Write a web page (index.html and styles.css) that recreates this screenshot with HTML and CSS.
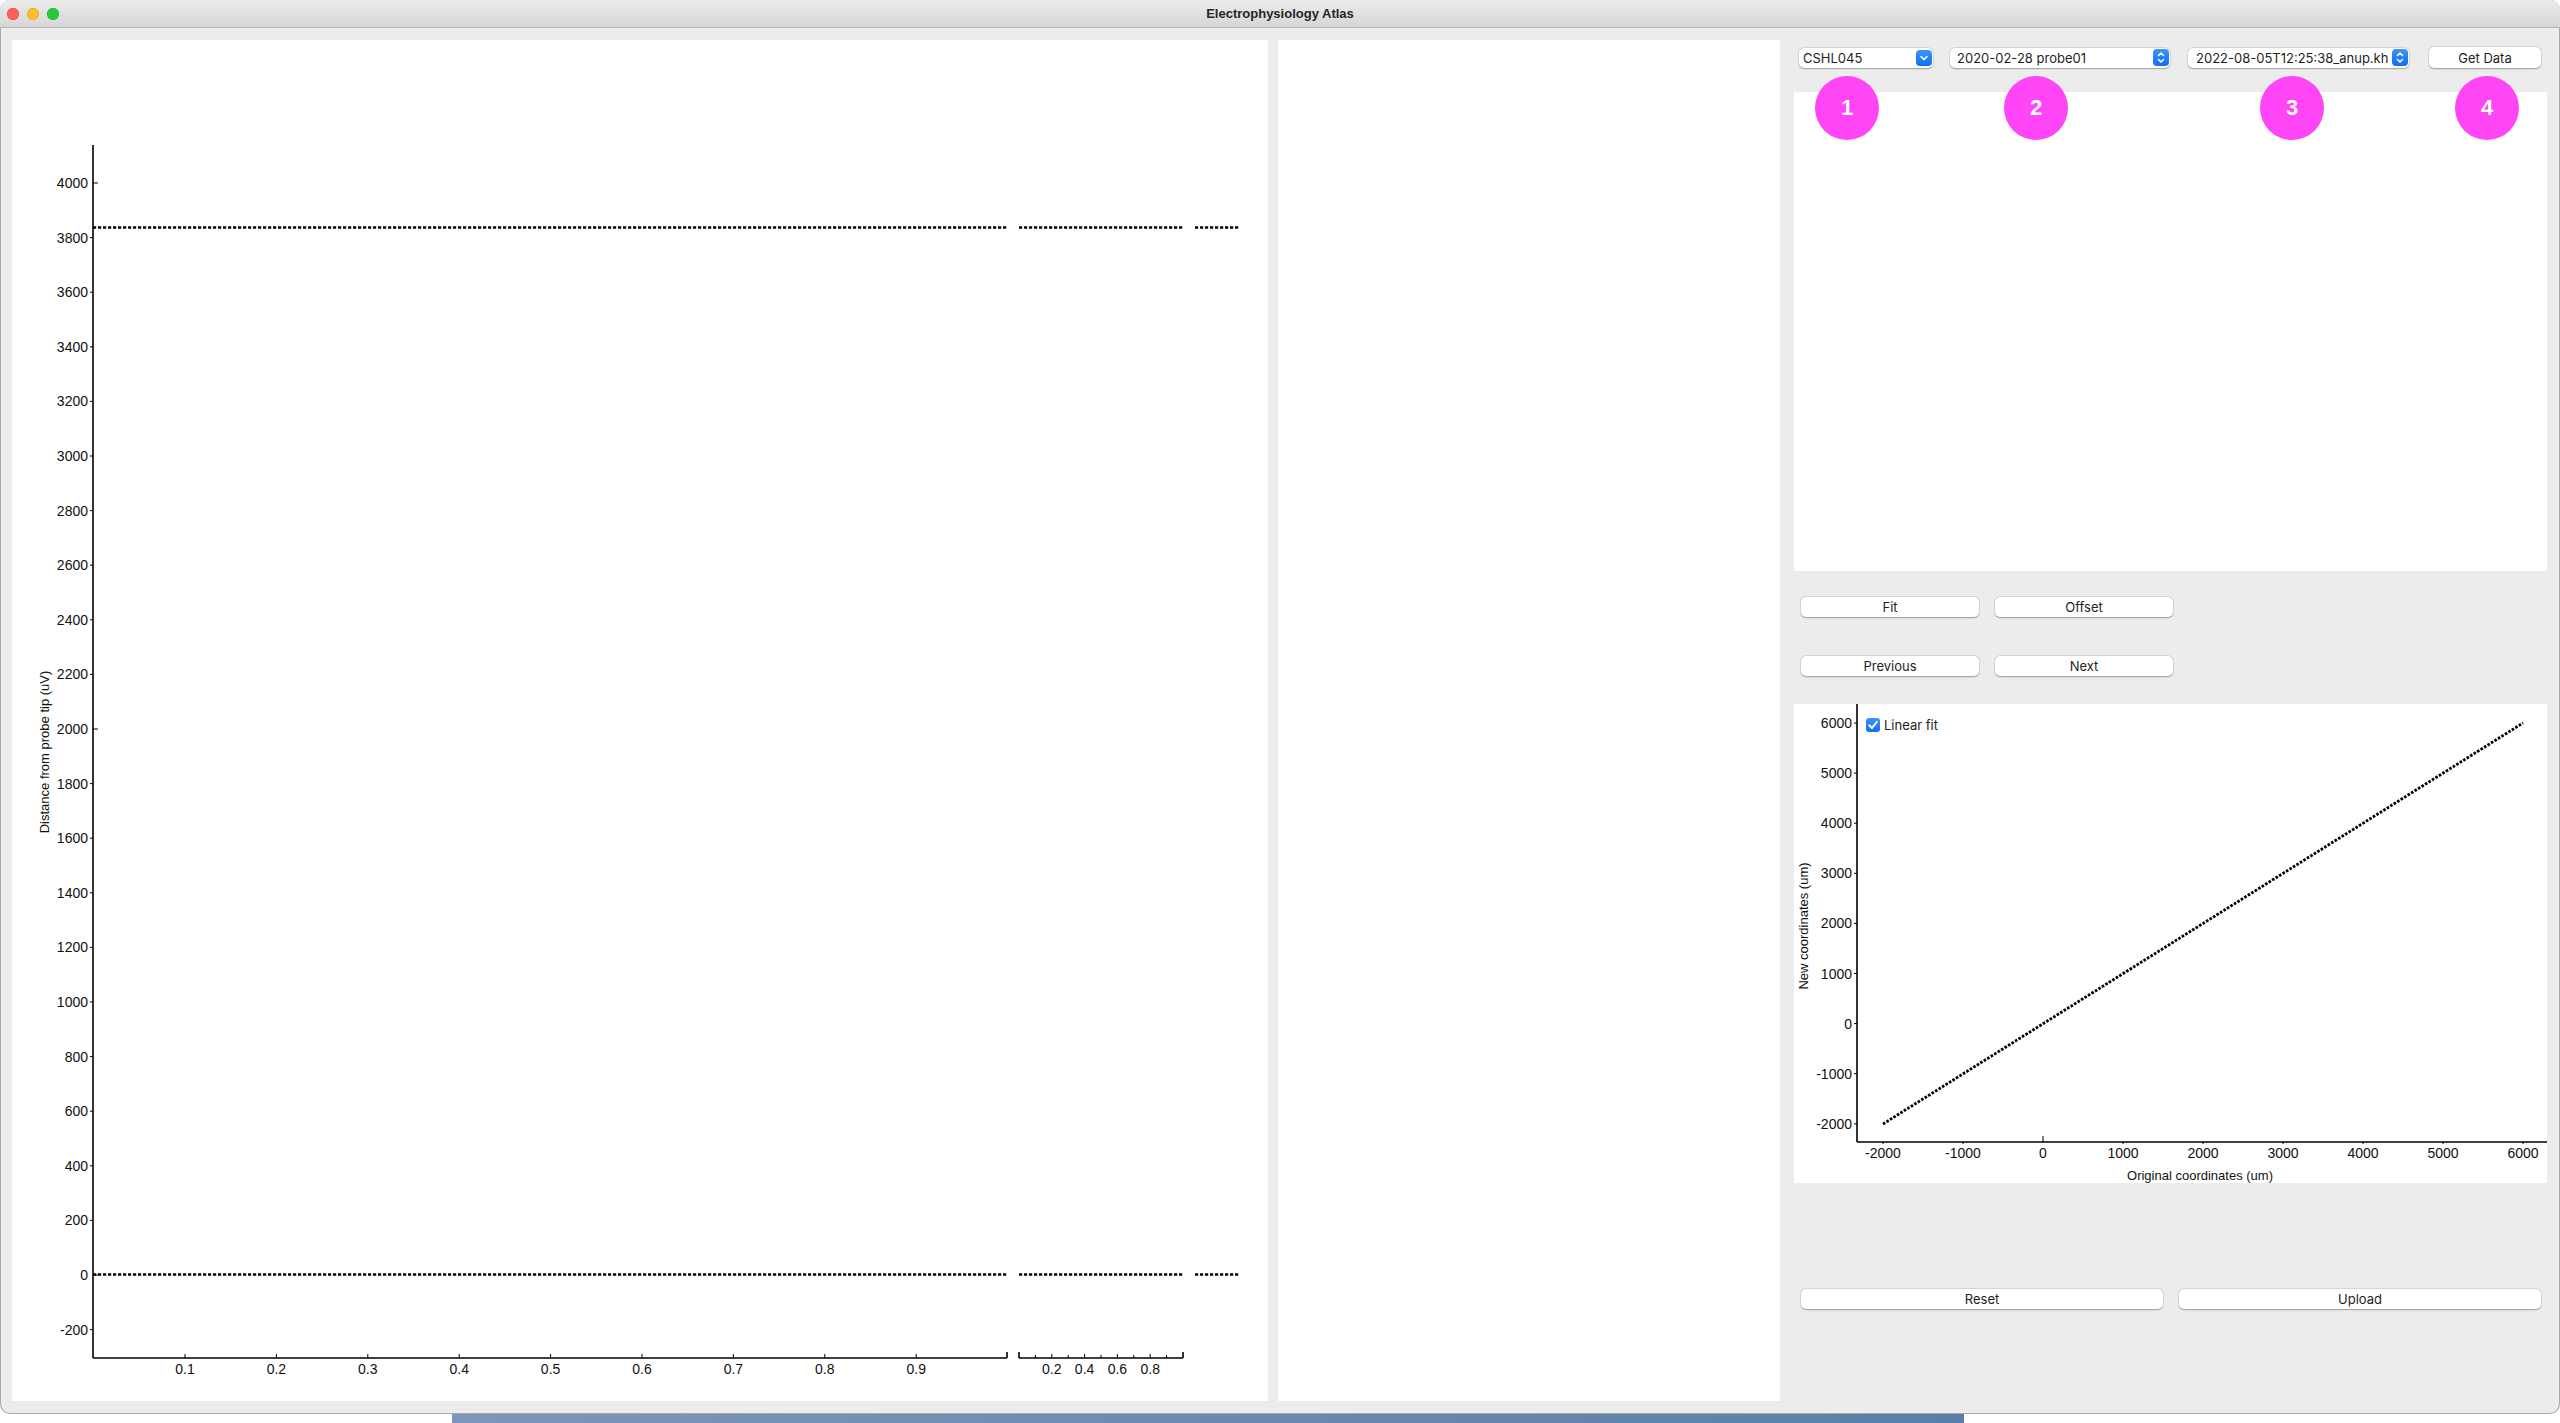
FILE: index.html
```html
<!DOCTYPE html>
<html>
<head>
<meta charset="utf-8">
<title>Electrophysiology Atlas</title>
<link rel="stylesheet" href="styles.css">
</head>
<body>
<div class="window">
  <div class="titlebar">
    <div class="lights">
      <span class="light red"></span>
      <span class="light yellow"></span>
      <span class="light green"></span>
    </div>
    <div class="title">Electrophysiology Atlas</div>
    <div class="lights-spacer"></div>
  </div>
  <div class="content">
    <div class="panel left-panel">
      <svg class="plot-svg" width="1256" height="1361" viewBox="0 0 1256 1361">
        <g class="axis" stroke="#000" stroke-width="1.6" fill="none">
          <line x1="81" y1="105" x2="81" y2="1318"/>
          <line x1="81" y1="1318" x2="995" y2="1318"/>
          <line x1="995" y1="1318" x2="995" y2="1312"/>
          <line x1="1007" y1="1318" x2="1171" y2="1318"/>
          <line x1="1007" y1="1318" x2="1007" y2="1312"/>
          <line x1="1171" y1="1318" x2="1171" y2="1312"/>
        </g>
        <g stroke="#000" stroke-width="1">
          <line x1="81" y1="143" x2="86" y2="143"/>
          <line x1="81" y1="689" x2="86" y2="689"/>
          <line x1="81" y1="1235" x2="86" y2="1235"/>
          <line x1="78" y1="197.6" x2="81" y2="197.6"/>
          <line x1="78" y1="252.2" x2="81" y2="252.2"/>
          <line x1="78" y1="306.8" x2="81" y2="306.8"/>
          <line x1="78" y1="361.4" x2="81" y2="361.4"/>
          <line x1="78" y1="416" x2="81" y2="416"/>
          <line x1="78" y1="470.6" x2="81" y2="470.6"/>
          <line x1="78" y1="525.2" x2="81" y2="525.2"/>
          <line x1="78" y1="579.8" x2="81" y2="579.8"/>
          <line x1="78" y1="634.4" x2="81" y2="634.4"/>
          <line x1="78" y1="743.6" x2="81" y2="743.6"/>
          <line x1="78" y1="798.2" x2="81" y2="798.2"/>
          <line x1="78" y1="852.8" x2="81" y2="852.8"/>
          <line x1="78" y1="907.4" x2="81" y2="907.4"/>
          <line x1="78" y1="962" x2="81" y2="962"/>
          <line x1="78" y1="1016.6" x2="81" y2="1016.6"/>
          <line x1="78" y1="1071.2" x2="81" y2="1071.2"/>
          <line x1="78" y1="1125.8" x2="81" y2="1125.8"/>
          <line x1="78" y1="1180.4" x2="81" y2="1180.4"/>
          <line x1="78" y1="1289.6" x2="81" y2="1289.6"/>
          <line x1="173" y1="1318" x2="173" y2="1314"/>
          <line x1="264.4" y1="1318" x2="264.4" y2="1314"/>
          <line x1="355.8" y1="1318" x2="355.8" y2="1314"/>
          <line x1="447.2" y1="1318" x2="447.2" y2="1314"/>
          <line x1="538.6" y1="1318" x2="538.6" y2="1314"/>
          <line x1="630" y1="1318" x2="630" y2="1314"/>
          <line x1="721.4" y1="1318" x2="721.4" y2="1314"/>
          <line x1="812.8" y1="1318" x2="812.8" y2="1314"/>
          <line x1="904.2" y1="1318" x2="904.2" y2="1314"/>
          <line x1="1023.4" y1="1318" x2="1023.4" y2="1315"/>
          <line x1="1039.8" y1="1318" x2="1039.8" y2="1314"/>
          <line x1="1056.2" y1="1318" x2="1056.2" y2="1315"/>
          <line x1="1072.6" y1="1318" x2="1072.6" y2="1314"/>
          <line x1="1089" y1="1318" x2="1089" y2="1315"/>
          <line x1="1105.4" y1="1318" x2="1105.4" y2="1314"/>
          <line x1="1121.8" y1="1318" x2="1121.8" y2="1315"/>
          <line x1="1138.2" y1="1318" x2="1138.2" y2="1314"/>
          <line x1="1154.6" y1="1318" x2="1154.6" y2="1315"/>
        </g>
        <g class="dash" stroke="#000" stroke-width="2.6" stroke-dasharray="3.2 1.8">
          <line x1="81" y1="187.5" x2="995" y2="187.5"/>
          <line x1="1007" y1="187.5" x2="1171" y2="187.5"/>
          <line x1="1183" y1="187.5" x2="1228" y2="187.5"/>
          <line x1="81" y1="1234.5" x2="995" y2="1234.5"/>
          <line x1="1007" y1="1234.5" x2="1171" y2="1234.5"/>
          <line x1="1183" y1="1234.5" x2="1228" y2="1234.5"/>
        </g>
        <g class="ticklabels" text-anchor="end">
          <text x="76" y="148">4000</text>
          <text x="76" y="202.6">3800</text>
          <text x="76" y="257.2">3600</text>
          <text x="76" y="311.8">3400</text>
          <text x="76" y="366.4">3200</text>
          <text x="76" y="421">3000</text>
          <text x="76" y="475.6">2800</text>
          <text x="76" y="530.2">2600</text>
          <text x="76" y="584.8">2400</text>
          <text x="76" y="639.4">2200</text>
          <text x="76" y="694">2000</text>
          <text x="76" y="748.6">1800</text>
          <text x="76" y="803.2">1600</text>
          <text x="76" y="857.8">1400</text>
          <text x="76" y="912.4">1200</text>
          <text x="76" y="967">1000</text>
          <text x="76" y="1021.6">800</text>
          <text x="76" y="1076.2">600</text>
          <text x="76" y="1130.8">400</text>
          <text x="76" y="1185.4">200</text>
          <text x="76" y="1240">0</text>
          <text x="76" y="1294.6">-200</text>
        </g>
        <g class="ticklabels" text-anchor="middle">
          <text x="173" y="1334">0.1</text>
          <text x="264.4" y="1334">0.2</text>
          <text x="355.8" y="1334">0.3</text>
          <text x="447.2" y="1334">0.4</text>
          <text x="538.6" y="1334">0.5</text>
          <text x="630" y="1334">0.6</text>
          <text x="721.4" y="1334">0.7</text>
          <text x="812.8" y="1334">0.8</text>
          <text x="904.2" y="1334">0.9</text>
          <text x="1039.8" y="1334">0.2</text>
          <text x="1072.6" y="1334">0.4</text>
          <text x="1105.4" y="1334">0.6</text>
          <text x="1138.2" y="1334">0.8</text>
        </g>
        <text class="axislabel" text-anchor="middle" transform="translate(37 712) rotate(-90)">Distance from probe tip (uV)</text>
      </svg>
    </div>
    <div class="panel mid-panel"></div>
    <div class="right-col">
      <div class="selectors">
        <div class="combo combo-subject">
          <span class="combo-text">CSHL045</span>
          <span class="combo-btn">
            <svg width="16" height="16" viewBox="0 0 16 16"><path d="M5 6.5 L8 9.5 L11 6.5" fill="none" stroke="#fff" stroke-width="1.6" stroke-linecap="round" stroke-linejoin="round"/></svg>
          </span>
        </div>
        <div class="combo combo-session">
          <span class="combo-text">2020-02-28 probe01</span>
          <span class="combo-btn updown">
            <svg width="16" height="17" viewBox="0 0 16 17"><path d="M5.5 6.5 L8 4 L10.5 6.5 M5.5 10.5 L8 13 L10.5 10.5" fill="none" stroke="#fff" stroke-width="1.5" stroke-linecap="round" stroke-linejoin="round"/></svg>
          </span>
        </div>
        <div class="combo combo-align">
          <span class="combo-text">2022-08-05T12:25:38_anup.kh</span>
          <span class="combo-btn updown">
            <svg width="16" height="17" viewBox="0 0 16 17"><path d="M5.5 6.5 L8 4 L10.5 6.5 M5.5 10.5 L8 13 L10.5 10.5" fill="none" stroke="#fff" stroke-width="1.5" stroke-linecap="round" stroke-linejoin="round"/></svg>
          </span>
        </div>
        <button class="btn btn-get">Get Data</button>
      </div>
      <div class="badge b1">1</div>
      <div class="badge b2">2</div>
      <div class="badge b3">3</div>
      <div class="badge b4">4</div>
      <div class="white-box top-box"></div>
      <div class="btn-row row-fit">
        <button class="btn btn-small">Fit</button>
        <button class="btn btn-small">Offset</button>
      </div>
      <div class="btn-row row-nav">
        <button class="btn btn-small">Previous</button>
        <button class="btn btn-small">Next</button>
      </div>
      <div class="white-box fit-plot">
        <svg class="plot-svg" width="753" height="479" viewBox="0 0 753 479">
          <g stroke="#000" stroke-width="1.6" fill="none">
            <line x1="63" y1="0" x2="63" y2="438"/>
            <line x1="63" y1="438" x2="753" y2="438"/>
          </g>
          <g stroke="#000" stroke-width="1">
            <line x1="249" y1="438" x2="249" y2="432"/>
            <line x1="89" y1="438" x2="89" y2="440"/>
            <line x1="169" y1="438" x2="169" y2="440"/>
            <line x1="329" y1="438" x2="329" y2="440"/>
            <line x1="409" y1="438" x2="409" y2="440"/>
            <line x1="489" y1="438" x2="489" y2="440"/>
            <line x1="569" y1="438" x2="569" y2="440"/>
            <line x1="649" y1="438" x2="649" y2="440"/>
            <line x1="729" y1="438" x2="729" y2="440"/>
            <line x1="60" y1="19" x2="63" y2="19"/>
            <line x1="60" y1="69.1" x2="63" y2="69.1"/>
            <line x1="60" y1="119.2" x2="63" y2="119.2"/>
            <line x1="60" y1="169.3" x2="63" y2="169.3"/>
            <line x1="60" y1="219.4" x2="63" y2="219.4"/>
            <line x1="60" y1="269.5" x2="63" y2="269.5"/>
            <line x1="60" y1="319.6" x2="63" y2="319.6"/>
            <line x1="60" y1="369.7" x2="63" y2="369.7"/>
            <line x1="60" y1="419.8" x2="63" y2="419.8"/>
          </g>
          <line x1="89" y1="420" x2="729" y2="19" stroke="#000" stroke-width="2.8" stroke-dasharray="2.6 1.5"/>
          <g class="ticklabels" text-anchor="end">
            <text x="58" y="24">6000</text>
            <text x="58" y="74.1">5000</text>
            <text x="58" y="124.2">4000</text>
            <text x="58" y="174.3">3000</text>
            <text x="58" y="224.4">2000</text>
            <text x="58" y="274.5">1000</text>
            <text x="58" y="324.6">0</text>
            <text x="58" y="374.7">-1000</text>
            <text x="58" y="424.8">-2000</text>
          </g>
          <g class="ticklabels" text-anchor="middle">
            <text x="89" y="454">-2000</text>
            <text x="169" y="454">-1000</text>
            <text x="249" y="454">0</text>
            <text x="329" y="454">1000</text>
            <text x="409" y="454">2000</text>
            <text x="489" y="454">3000</text>
            <text x="569" y="454">4000</text>
            <text x="649" y="454">5000</text>
            <text x="729" y="454">6000</text>
          </g>
          <text class="axislabel" x="406" y="476" text-anchor="middle">Original coordinates (um)</text>
          <text class="axislabel" text-anchor="middle" transform="translate(14 222) rotate(-90)">New coordinates (um)</text>
        </svg>
        <label class="checkbox">
          <span class="check-box">
            <svg width="14" height="14" viewBox="0 0 14 14"><path d="M3.3 7.2 L6 10 L10.8 3.8" fill="none" stroke="#fff" stroke-width="2" stroke-linecap="round" stroke-linejoin="round"/></svg>
          </span>
          <span class="check-text">Linear fit</span>
        </label>
      </div>
      <div class="btn-row row-bottom">
        <button class="btn btn-wide">Reset</button>
        <button class="btn btn-wide">Upload</button>
      </div>
    </div>
  </div>
</div>
<div class="desktop">
  <div class="desktop-blue"></div>
</div>
</body>
</html>
```

FILE: styles.css
```css
html, body {
  margin: 0;
  padding: 0;
  background: #ffffff;
  width: 2560px;
  height: 1423px;
  overflow: hidden;
}

.window {
  width: 2560px;
  height: 1414px;
  background: #ececec;
  border-radius: 10px;
  overflow: hidden;
  display: flex;
  flex-direction: column;
  box-shadow: inset 0 0 0 1px rgba(40, 45, 60, 0.35);
  font-family: "Inter", "Liberation Sans", sans-serif;
}

.titlebar {
  height: 27px;
  flex: none;
  background: linear-gradient(#ececec, #d6d6d6);
  border-bottom: 1px solid #b3b3b3;
  display: flex;
  align-items: center;
}

.lights {
  width: 70px;
  display: flex;
  gap: 8px;
  padding-left: 7px;
  box-sizing: border-box;
}

.lights-spacer {
  width: 70px;
}

.light {
  width: 12px;
  height: 12px;
  border-radius: 50%;
  display: block;
}

.red { background: #fe5f57; box-shadow: inset 0 0 0 0.5px #e0443e; }
.yellow { background: #febc2e; box-shadow: inset 0 0 0 0.5px #dea123; }
.green { background: #28c840; box-shadow: inset 0 0 0 0.5px #1aab29; }

.title {
  flex: 1;
  text-align: center;
  font-family: "Liberation Sans", "Inter", sans-serif;
  font-weight: bold;
  font-size: 13px;
  color: #262626;
}

.content {
  flex: 1;
  display: flex;
  padding: 12px 13px 13px 12px;
  box-sizing: border-box;
}

.panel {
  background: #ffffff;
  height: 1361px;
}

.left-panel {
  width: 1256px;
}

.mid-panel {
  width: 502px;
  margin-left: 10px;
}

.plot-svg {
  display: block;
}

.ticklabels text {
  font-family: "Liberation Sans", sans-serif;
  font-size: 14px;
  fill: #111111;
}

.axislabel {
  font-family: "Liberation Sans", sans-serif;
  font-size: 13px;
  fill: #111111;
}

.right-col {
  width: 753px;
  margin-left: 14px;
  display: flex;
  flex-direction: column;
  position: relative;
}

.selectors {
  height: 21px;
  margin-top: 7px;
  padding-left: 5px;
  display: flex;
  align-items: center;
}

.combo {
  height: 20px;
  background: #ffffff;
  border-radius: 5px;
  box-shadow: 0 0.5px 1.5px rgba(0, 0, 0, 0.3), 0 0 0 0.5px rgba(0, 0, 0, 0.08);
  display: flex;
  align-items: center;
  box-sizing: border-box;
  padding-left: 4px;
  padding-right: 1px;
  font-size: 13px;
  color: #1e1e1e;
}

.combo-text {
  flex: 1;
  overflow: hidden;
  white-space: nowrap;
}

.combo-subject { width: 134px; }
.combo-session { width: 220px; margin-left: 17px; padding-left: 7px; }
.combo-align { width: 221px; margin-left: 18px; padding-left: 8px; }

.combo-btn {
  width: 16px;
  height: 16px;
  border-radius: 4px;
  background: linear-gradient(#3b95fb, #0f6ff0);
  display: flex;
  align-items: center;
  justify-content: center;
  flex: none;
}

.combo-btn.updown {
  height: 17px;
}

.combo-btn svg {
  display: block;
}

.btn {
  height: 20px;
  background: #ffffff;
  border: none;
  border-radius: 5px;
  box-shadow: 0 0.5px 1.5px rgba(0, 0, 0, 0.32), 0 0 0 0.5px rgba(0, 0, 0, 0.08);
  font-family: "Inter", "Liberation Sans", sans-serif;
  font-size: 13px;
  color: #1e1e1e;
  padding: 0;
  margin: 0;
}

.btn-get {
  width: 112px;
  height: 21px;
  margin-left: 20px;
}

.badge {
  position: absolute;
  top: 36px;
  width: 64px;
  height: 64px;
  border-radius: 50%;
  background: #ff45f6;
  color: #ffffff;
  font-family: "Liberation Sans", sans-serif;
  font-weight: bold;
  font-size: 22px;
  display: flex;
  align-items: center;
  justify-content: center;
  z-index: 2;
}

.b1 { left: 21px; }
.b2 { left: 210px; }
.b3 { left: 466px; }
.b4 { left: 661px; }

.white-box {
  background: #ffffff;
  width: 753px;
  height: 479px;
}

.top-box {
  margin-top: 24px;
}

.btn-row {
  display: flex;
  gap: 16px;
  padding-left: 7px;
  height: 20px;
}

.row-fit { margin-top: 26px; }
.row-nav { margin-top: 39px; }
.row-bottom { margin-top: 106px; }

.btn-small { width: 178px; }
.btn-wide { width: 362px; }

.fit-plot {
  margin-top: 28px;
  position: relative;
}

.checkbox {
  position: absolute;
  left: 72px;
  top: 13px;
  display: flex;
  align-items: center;
  gap: 4px;
  font-family: "Inter", "Liberation Sans", sans-serif;
  font-size: 13px;
  color: #222222;
}

.check-box {
  width: 14px;
  height: 14px;
  border-radius: 3px;
  background: linear-gradient(#3a93fb, #1370f0);
  display: block;
}

.check-box svg {
  display: block;
}

.desktop {
  height: 9px;
  display: flex;
}

.desktop-blue {
  margin-left: 452px;
  width: 1512px;
  background: linear-gradient(90deg, #7d96b9, #5b7ea8);
}
```
